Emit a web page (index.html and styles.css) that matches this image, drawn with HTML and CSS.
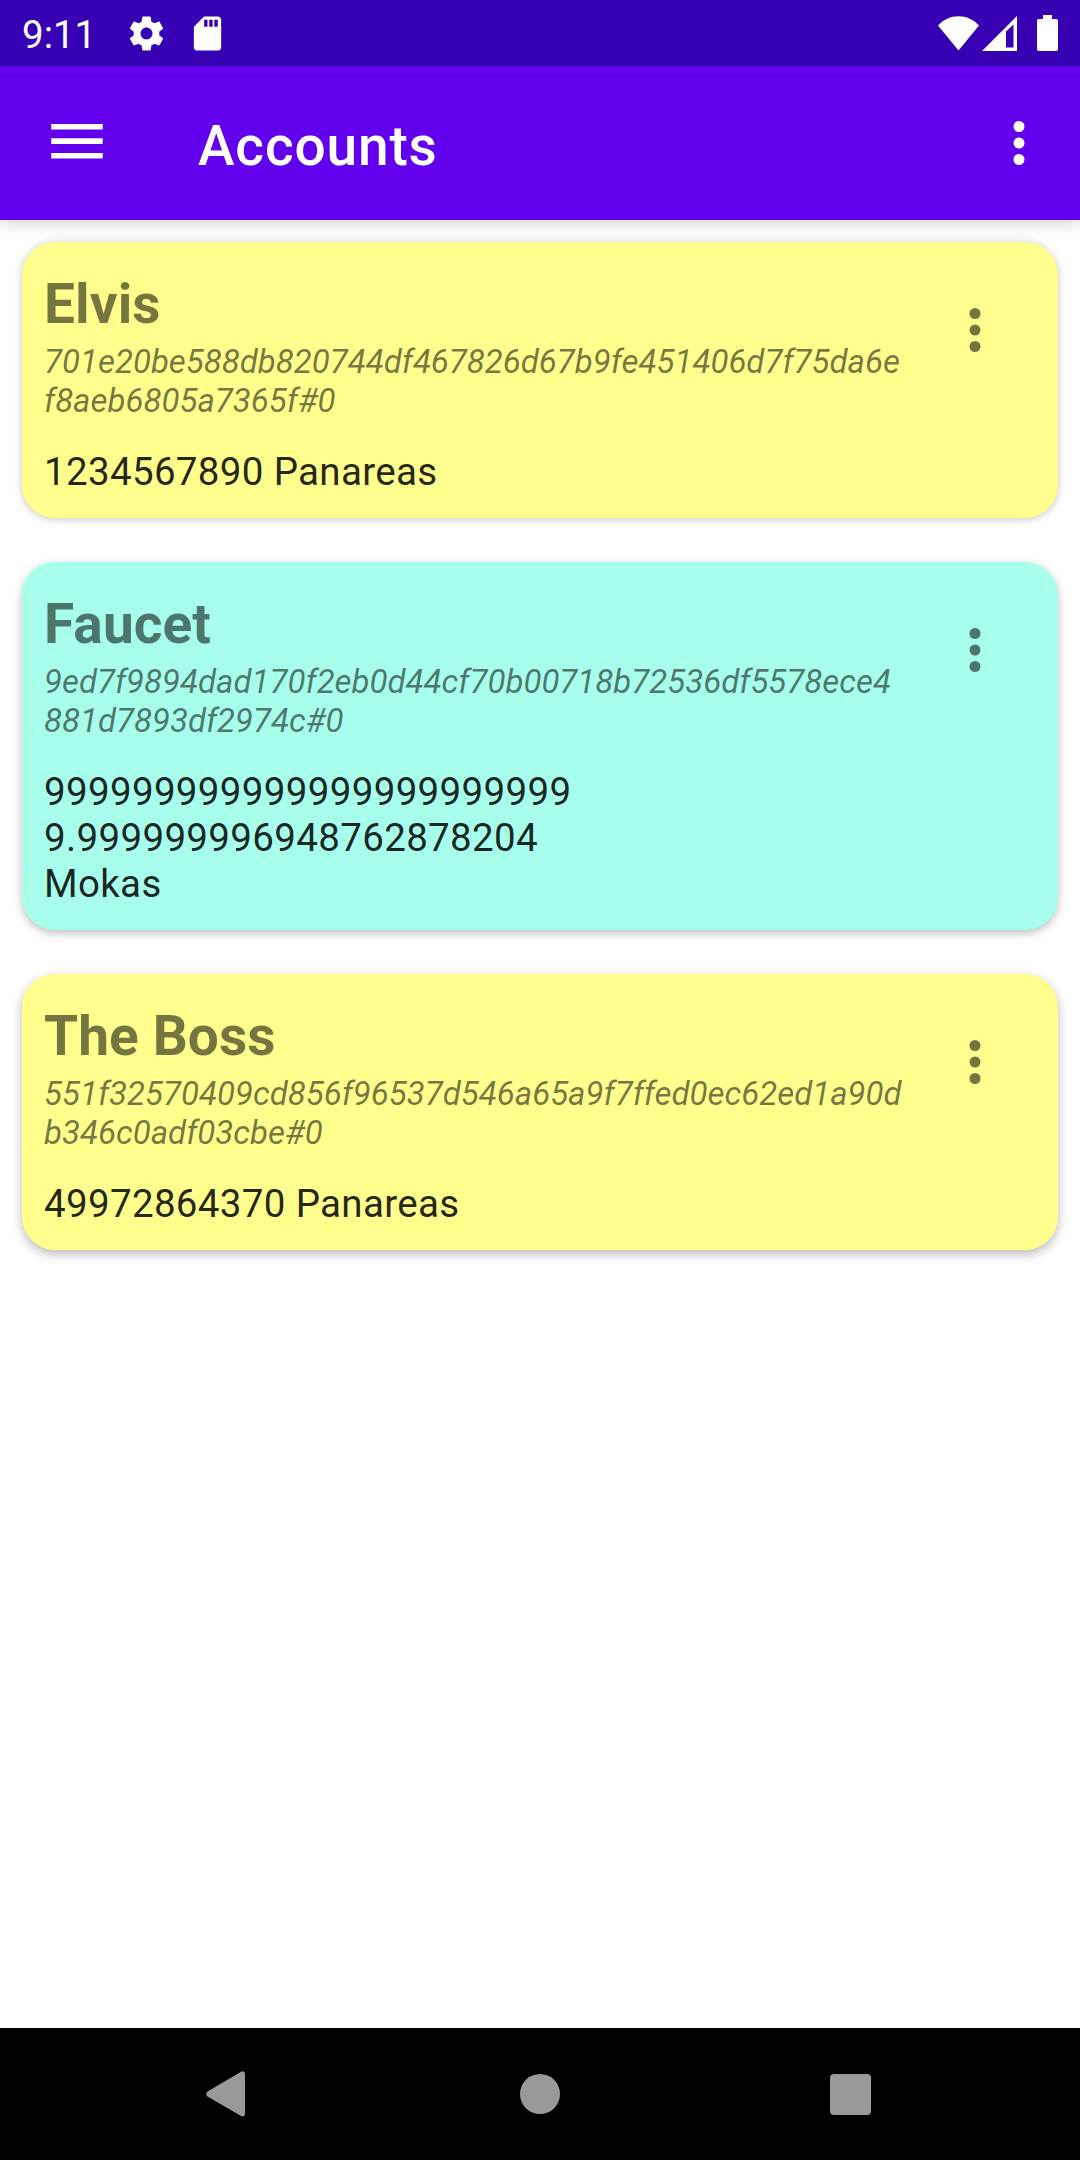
FILE: index.html
```html
<!DOCTYPE html>
<html lang="en">
<head>
<meta charset="utf-8">
<title>Accounts</title>
<link rel="stylesheet" href="styles.css">
</head>
<body>
<div class="screen">
  <div class="statusbar">
    <span class="clock">9:11</span>
    <svg class="gear" viewBox="0 0 24 24"><path d="M19.43 12.98c.04-.32.07-.64.07-.98s-.03-.66-.07-.98l2.11-1.65c.19-.15.24-.42.12-.64l-2-3.46c-.12-.22-.39-.3-.61-.22l-2.49 1c-.52-.4-1.08-.73-1.69-.98l-.38-2.65C14.46 2.18 14.25 2 14 2h-4c-.25 0-.46.18-.49.42l-.38 2.65c-.61.25-1.17.59-1.69.98l-2.49-1c-.23-.09-.49 0-.61.22l-2 3.46c-.13.22-.07.49.12.64l2.11 1.65c-.04.32-.07.65-.07.98s.03.66.07.98l-2.11 1.65c-.19.15-.24.42-.12.64l2 3.46c.12.22.39.3.61.22l2.49-1c.52.4 1.08.73 1.69.98l.38 2.65c.03.24.24.42.49.42h4c.25 0 .46-.18.49-.42l.38-2.65c.61-.25 1.17-.59 1.69-.98l2.49 1c.23.09.49 0 .61-.22l2-3.46c.12-.22.07-.49-.12-.64l-2.11-1.65zM12 15.500c-1.930 0-3.500-1.570-3.500-3.500s1.570-3.500 3.500-3.500 3.500 1.570 3.500 3.500-1.570 3.500-3.500 3.500z"/></svg>
    <svg class="sdcard" viewBox="0 0 24 24"><path d="M18 2h-8L4.020 8 4 20c0 1.100.9 2 2 2h12c1.100 0 2-.9 2-2V4c0-1.100-.9-2-2-2zm-6 6h-2V4h2v4zm3 0h-2V4h2v4zm3 0h-2V4h2v4z"/></svg>
    <span class="spacer"></span>
    <svg class="wifi" viewBox="0 0 41 35"><path d="M20.500 34.500 0 9.500C5.500 3.500 12.500.2 20.500.2S35.500 3.500 41 9.500z"/></svg>
    <svg class="signal" viewBox="0 0 35 35"><path fill-rule="evenodd" d="M35 0V35H0zM24 15.500V31.500H31.500V8.500z"/></svg>
    <svg class="battery" viewBox="0 0 21 36"><path d="M6 0h9v4h4.200A1.800 1.800 0 0 1 21 5.800v28.400a1.800 1.800 0 0 1-1.800 1.800H1.800A1.800 1.800 0 0 1 0 34.200V5.800A1.800 1.800 0 0 1 1.800 4H6z"/></svg>
  </div>
  <header class="toolbar">
    <svg class="menu" viewBox="0 0 52 36"><path d="M.2 0h51.500v5.600H.2zM.2 14.300h51.500v5.600H.2zM.2 29h51.500v5.600H.2z"/></svg>
    <h1 class="heading">Accounts</h1>
    <svg class="more" viewBox="0 0 24 24"><circle cx="12" cy="6" r="2"/><circle cx="12" cy="12" r="2"/><circle cx="12" cy="18" r="2"/></svg>
  </header>
  <main class="accounts">
    <article class="card yellow">
      <div class="info">
        <h2 class="name">Elvis</h2>
        <p class="hash">701e20be588db820744df467826d67b9fe451406d7f75da6e<br>f8aeb6805a7365f#0</p>
        <p class="amount">1234567890 Panareas</p>
      </div>
      <svg class="more" viewBox="0 0 24 24"><circle cx="12" cy="6" r="2"/><circle cx="12" cy="12" r="2"/><circle cx="12" cy="18" r="2"/></svg>
    </article>
    <article class="card mint">
      <div class="info">
        <h2 class="name">Faucet</h2>
        <p class="hash">9ed7f9894dad170f2eb0d44cf70b00718b72536df5578ece4<br>881d7893df2974c#0</p>
        <p class="amount">999999999999999999999999<br>9.999999996948762878204<br>Mokas</p>
      </div>
      <svg class="more" viewBox="0 0 24 24"><circle cx="12" cy="6" r="2"/><circle cx="12" cy="12" r="2"/><circle cx="12" cy="18" r="2"/></svg>
    </article>
    <article class="card yellow low">
      <div class="info">
        <h2 class="name">The Boss</h2>
        <p class="hash">551f32570409cd856f96537d546a65a9f7ffed0ec62ed1a90d<br>b346c0adf03cbe#0</p>
        <p class="amount">49972864370 Panareas</p>
      </div>
      <svg class="more" viewBox="0 0 24 24"><circle cx="12" cy="6" r="2"/><circle cx="12" cy="12" r="2"/><circle cx="12" cy="18" r="2"/></svg>
    </article>
  </main>
  <nav class="navbar">
    <svg class="back" viewBox="0 0 40 46"><path d="M35.500.6 1.500 20.500Q-1.200 23 1.500 25.500L35.500 45.200Q38.700 46.300 39 43V3Q38.700-.4 35.500.6z"/></svg>
    <span class="home"></span>
    <span class="recent"></span>
  </nav>
</div>
</body>
</html>
```
FILE: styles.css
```css
* { box-sizing: border-box; margin: 0; padding: 0; }

body { background: #fff; font-family: Roboto, sans-serif; }

svg { display: block; flex: none; fill: currentColor; }

.screen { display: flex; flex-direction: column; width: 1080px; height: 2160px; overflow: hidden; }

.statusbar {
  position: relative;
  z-index: 1;
  display: flex;
  align-items: center;
  height: 66px;
  padding: 0 22px;
  background: #3700b3;
  color: #fff;
}
.clock { width: 104px; font-size: 38.500px; line-height: 46px; margin-top: 3px; }
.gear { width: 41px; height: 41px; margin-top: 1px; }
.sdcard { width: 41px; height: 41px; margin: 1px 0 0 20px; }
.spacer { flex: 1; }
.wifi { width: 41px; height: 35px; margin-right: 3px; }
.signal { width: 35px; height: 35px; margin-right: 20px; }
.battery { width: 21px; height: 36px; }

.toolbar {
  display: flex;
  align-items: center;
  height: 154px;
  padding: 0 28px 0 51px;
  background: #6200ee;
  color: #fff;
  box-shadow: 0 3px 16px rgba(0, 0, 0, 0.18);
}
.menu { width: 52px; height: 36px; margin-bottom: 2px; }
.heading {
  flex: 1;
  margin: 6px 0 0 95px;
  font-size: 55px;
  font-weight: 500;
  line-height: 65px;
  letter-spacing: 0.85px;
}
.more { width: 66px; height: 66px; }

.accounts {
  display: flex;
  flex: 1;
  flex-direction: column;
  gap: 44px;
  padding: 22px;
}
.card {
  display: flex;
  justify-content: space-between;
  padding: 30px 50px 23px 22px;
  border-radius: 33px;
  box-shadow: 0 1px 9px rgba(0, 0, 0, 0.24);
}
.card .more { margin-top: 25px; color: rgba(0, 0, 0, 0.54); }
.yellow { background: #ffff8d; }
.mint { background: #a7ffeb; box-shadow: 0 3px 10px rgba(0, 0, 0, 0.26); }
.low { box-shadow: 0 4px 11px rgba(0, 0, 0, 0.28); }

.name {
  font-size: 55px;
  font-weight: 700;
  line-height: 65px;
  letter-spacing: 0.1px;
  color: rgba(0, 0, 0, 0.54);
}
.hash {
  margin-top: 5px;
  font-size: 33px;
  font-style: italic;
  line-height: 39px;
  white-space: nowrap;
  color: rgba(0, 0, 0, 0.54);
}
.amount {
  margin-top: 29px;
  font-size: 38.500px;
  line-height: 46px;
  letter-spacing: 0.34px;
  color: rgba(0, 0, 0, 0.87);
}

.navbar {
  display: flex;
  align-items: center;
  justify-content: space-between;
  height: 132px;
  padding: 0 209px 0 206px;
  background: #000;
  color: #999;
}
.back { width: 40px; height: 46px; }
.home { width: 40px; height: 40px; margin-left: 3px; border-radius: 50%; background: #999; }
.recent { width: 41px; height: 41px; margin-top: 1px; border-radius: 4px; background: #999; }
```
